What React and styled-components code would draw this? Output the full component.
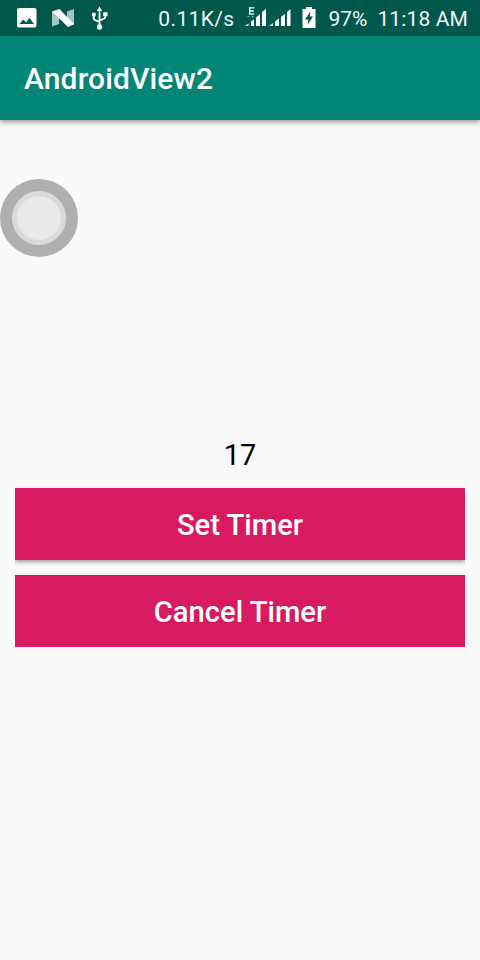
import React from "react";
import styled, { createGlobalStyle } from "styled-components";

const GlobalStyle = createGlobalStyle`
  *, *::before, *::after { box-sizing: border-box; }
  body { margin: 0; background: #fafafa; }
`;

const Screen = styled.div`
  position: relative;
  display: flex;
  flex-direction: column;
  width: 480px;
  height: 960px;
  overflow: hidden;
  background: #fafafa;
  font-family: Roboto, "Liberation Sans", sans-serif;
`;

const StatusBar = styled.header`
  display: flex;
  justify-content: space-between;
  height: 36px;
  flex: none;
  padding: 0 12px 0 16px;
  background: #00574b;
  color: #fff;
`;

const StatusGroup = styled.div`
  display: flex;
  align-items: center;
`;

const StatusText = styled.span`
  font-size: 21px;
  line-height: 36px;
  padding-top: 1px;
  letter-spacing: ${(p) => p.$spacing || "0"};
  margin-left: ${(p) => p.$gap || "0"};
  white-space: nowrap;
  color: #f2f6f5;
`;

const Icon = styled.svg`
  display: block;
  flex: none;
  margin-left: ${(p) => p.$gap || "0"};
`;

const AppBar = styled.div`
  display: flex;
  align-items: center;
  height: 84px;
  flex: none;
  padding: 2px 24px 0;
  background: #008577;
  box-shadow: 0 2px 5px rgba(0, 0, 0, 0.4);
`;

const Title = styled.h1`
  margin: 0;
  font-size: 30px;
  font-weight: 500;
  line-height: 36px;
  letter-spacing: 0.14px;
  color: #fff;
`;

const Content = styled.main`
  display: flex;
  flex-direction: column;
  flex: 1;
  padding: 317px 15px 0;
`;

const Count = styled.div`
  height: 36px;
  font-size: 29px;
  line-height: 36px;
  text-align: center;
  color: #000;
`;

const Actions = styled.div`
  display: flex;
  flex-direction: column;
  gap: 15px;
  padding-top: 15px;
  overflow: hidden;
`;

const ActionButton = styled.button`
  height: 72px;
  padding: 2px 0 0;
  border: 0;
  background: #d81b60;
  color: #fff;
  font: 500 29.2px/36px Roboto, "Liberation Sans", sans-serif;
  box-shadow: 0 2px 4px rgba(0, 0, 0, 0.36);
`;

const FloatingDot = styled.div`
  position: absolute;
  top: 179px;
  left: 0;
  width: 78px;
  height: 78px;
  display: grid;
  place-items: center;
  border-radius: 50%;
  background: #afafaf;
`;

const DotCore = styled.div`
  width: 54px;
  height: 54px;
  border: 5px solid #dadada;
  border-radius: 50%;
  background: #e9e9e9;
`;

const PhotoIcon = () => (
  <Icon width="22" height="22" viewBox="0 0 22 22">
    <path
      fill="#fff"
      fillRule="evenodd"
      d="M3 1H18.5Q20.5 1 20.5 3V18.5Q20.5 20.5 18.5 20.5H3Q1 20.5 1 18.5V3Q1 1 3 1ZM3.5 17H18L13.5 10.7L10 15.5L7.2 12.5Z"
    />
  </Icon>
);

const NougatIcon = () => (
  <Icon $gap="13px" width="24" height="20" viewBox="0 0 24 20">
    <path fill="#a6c4c0" d="M1 3.5L8 6V16L1 18.5ZM23 1V17L16 13V3.5Z" />
    <path fill="#fff" d="M1 3.5L8.5 1L23 16.2L17 19Z" />
  </Icon>
);

const UsbIcon = () => (
  <Icon $gap="16px" width="18" height="24" viewBox="0 0 18 24">
    <g fill="none" stroke="#fff" strokeWidth="1.8">
      <path d="M8.5 3V20M2.7 8V12.2Q2.7 14.5 8.5 15.5M14.3 8V10.7Q14.3 13 8.5 14" />
    </g>
    <path fill="#fff" d="M8.5 0.5L11.2 5H5.8ZM12.2 6.3H16.5V10.3H12.2Z" />
    <circle cx="2.8" cy="8.7" r="2.1" fill="#fff" />
    <circle cx="8.5" cy="21" r="2.7" fill="#fff" />
  </Icon>
);

const EdgeSignalIcon = () => (
  <Icon $gap="11px" width="22" height="22" viewBox="0 0 22 22">
    <path stroke="#fff" strokeWidth="1.3" fill="none" d="M9.3 0.8H4.7V7.2H9.3M4.7 4H8.8" />
    <path fill="#fff" d="M0 19L3.5 16.5V19ZM6 14.5L9 12.3V19H6ZM11 10.5L15 7V19H11ZM17 5L21 2V19H17Z" />
    <path fill="#8bb1ab" d="M2.5 9h2v1H2.5ZM6.5 9h2.4l-1.2 2Z" />
  </Icon>
);

const SignalIcon = () => (
  <Icon $gap="2px" width="22" height="22" viewBox="0 0 22 22">
    <path fill="#fff" d="M0 19L4 16V19ZM6 14.5L10 11.3V19H6ZM12 10L16 6.8V19H12ZM18 5L21.5 2V19H18Z" />
  </Icon>
);

const BatteryIcon = () => (
  <Icon $gap="11px" width="14" height="22" viewBox="0 0 14 22">
    <path
      fill="#fff"
      fillRule="evenodd"
      d="M4 0H10V2H13.5V21H.5V2H4ZM8.5 4.5L3 12.5H6.5L5.5 18L11 9.5H7.8Z"
    />
  </Icon>
);

export default function App() {
  return (
    <>
      <GlobalStyle />
      <Screen>
        <StatusBar>
          <StatusGroup>
            <PhotoIcon />
            <NougatIcon />
            <UsbIcon />
          </StatusGroup>
          <StatusGroup>
            <StatusText $spacing="0.35px">0.11K/s</StatusText>
            <EdgeSignalIcon />
            <SignalIcon />
            <BatteryIcon />
            <StatusText $gap="12px">97%</StatusText>
            <StatusText $gap="10px" $spacing="0.13px">11:18 AM</StatusText>
          </StatusGroup>
        </StatusBar>
        <AppBar>
          <Title>AndroidView2</Title>
        </AppBar>
        <Content>
          <Count>17</Count>
          <Actions>
            <ActionButton type="button">Set Timer</ActionButton>
            <ActionButton type="button">Cancel Timer</ActionButton>
          </Actions>
        </Content>
        <FloatingDot>
          <DotCore />
        </FloatingDot>
      </Screen>
    </>
  );
}
